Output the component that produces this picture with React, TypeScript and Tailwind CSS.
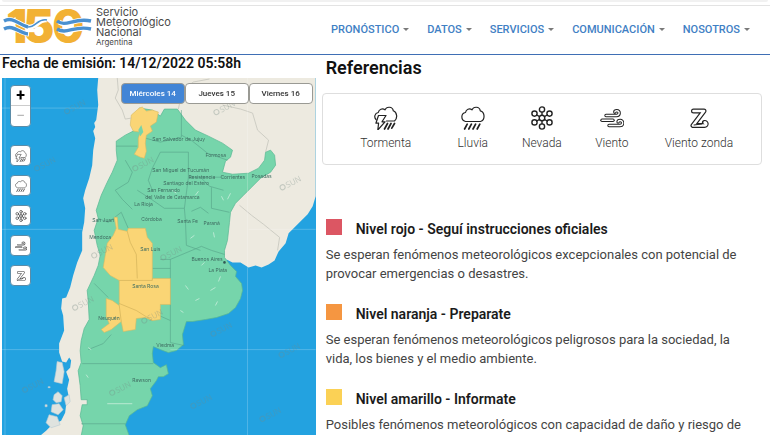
import React, { useState } from 'react';
import clsx from 'clsx';

const menu = ['PRONÓSTICO', 'DATOS', 'SERVICIOS', 'COMUNICACIÓN', 'NOSOTROS'];

const days = ['Miércoles 14', 'Jueves 15', 'Viernes 16'];

const levels = [
  {
    color: 'bg-[#dc5663]',
    title: 'Nivel rojo - Seguí instrucciones oficiales',
    text: 'Se esperan fenómenos meteorológicos excepcionales con potencial de provocar emergencias o desastres.',
  },
  {
    color: 'bg-[#f59641]',
    title: 'Nivel naranja - Preparate',
    text: 'Se esperan fenómenos meteorológicos peligrosos para la sociedad, la vida, los bienes y el medio ambiente.',
  },
  {
    color: 'bg-[#fbd155]',
    title: 'Nivel amarillo - Informate',
    text: 'Posibles fenómenos meteorológicos con capacidad de daño y riesgo de',
  },
];

const cities = [
  { name: 'San Salvador de Jujuy', x: 152, y: 141 },
  { name: 'Formosa', x: 205, y: 157 },
  { name: 'San Miguel de Tucumán', x: 152, y: 172 },
  { name: 'Resistencia', x: 188, y: 179 },
  { name: 'Corrientes', x: 220, y: 179 },
  { name: 'Posadas', x: 251, y: 178 },
  { name: 'Santiago del Estero', x: 163, y: 185 },
  { name: 'San Fernando', x: 147, y: 192 },
  { name: 'del Valle de Catamarca', x: 145, y: 199 },
  { name: 'La Rioja', x: 134, y: 206 },
  { name: 'San Juan', x: 92, y: 222 },
  { name: 'Córdoba', x: 141, y: 221 },
  { name: 'Santa Fe', x: 177, y: 223 },
  { name: 'Paraná', x: 203, y: 225 },
  { name: 'Mendoza', x: 89, y: 239 },
  { name: 'San Luis', x: 140, y: 251 },
  { name: 'Buenos Aires', x: 191, y: 261 },
  { name: 'La Plata', x: 208, y: 272 },
  { name: 'Santa Rosa', x: 132, y: 288 },
  { name: 'Neuquén', x: 98, y: 319 },
  { name: 'Viedma', x: 156, y: 346 },
  { name: 'Rawson', x: 132, y: 381 },
];

const marks = [
  [216, 112], [282, 187], [67, 111], [37, 168], [94, 255], [163, 257], [135, 168], [75, 307],
  [144, 320], [25, 389], [112, 392], [213, 333], [281, 354], [193, 405], [262, 418],
];

type IconProps = { className?: string };

function StormIcon({ className }: IconProps) {
  return (
    <svg viewBox="0 0 24 24" className={className} fill="none" stroke="currentColor" strokeWidth="1.2" strokeLinecap="round" strokeLinejoin="round">
      <path d="M2 13.500C-.3 11 .8 7.200 4.300 6.500 4.800 3.300 8.500 1.800 11 3.800 12.500.3 18.500.2 19.300 4.800 23 6.200 24 12 20.500 15H12.500" />
      <path d="M4.500 9.500 1.900 17.200H4.600L3.800 24 11 15.800H8L12 9.500Z" />
      <path strokeWidth="1.700" d="M13.500 17.500 10.500 23M17 17.500 14 23M20.500 17.500 17.800 22.200" />
    </svg>
  );
}

function RainIcon({ className }: IconProps) {
  return (
    <svg viewBox="0 0 24 24" className={className} fill="none" stroke="currentColor" strokeWidth="1.2" strokeLinecap="round" strokeLinejoin="round">
      <path d="M4.500 15.500C-.5 14 -.2 7.200 4.500 6.500 5 3.300 8.500 1.800 11 3.800 12.500.3 18.500.2 19.300 4.800 24 6 24.500 14 19.500 15.500Z" />
      <path strokeWidth="1.700" d="M6.200 18.200 3.600 23M10.400 18.200 7.800 23M14.600 18.200 12 23M18.800 18.200 16.200 23" />
    </svg>
  );
}

function SnowIcon({ className }: IconProps) {
  return (
    <svg viewBox="0 0 24 24" className={className} fill="none" stroke="currentColor" strokeWidth="1.4" strokeLinecap="round">
      <circle cx="12" cy="12" r="2.800" />
      <circle cx="12" cy="3.500" r="2.600" />
      <circle cx="12" cy="20.500" r="2.600" />
      <circle cx="4.500" cy="7.600" r="2.600" />
      <circle cx="19.500" cy="7.600" r="2.600" />
      <circle cx="4.500" cy="16.400" r="2.600" />
      <circle cx="19.500" cy="16.400" r="2.600" />
      <path d="M12 6.200v3M12 14.800v3M6.800 9l2.800 1.600M14.400 13.400l2.800 1.600M17.200 9l-2.800 1.600M9.600 13.400 6.800 15" />
    </svg>
  );
}

function WindIcon({ className }: IconProps) {
  return (
    <svg viewBox="0 0 24 24" className={className} fill="none" strokeLinecap="round" strokeLinejoin="round">
      <g stroke="currentColor" strokeWidth="3.400">
        <path d="M6 9.500h10.500c3.500 0 3.500-4.800.3-4.800-1.300 0-2 .6-2 1.300" />
        <path d="M2 14.300h11" />
        <path d="M9 19.500h11c3.500 0 3.500-5 .2-5-1.300 0-2.100.6-2.100 1.400" />
      </g>
      <g stroke="white" strokeWidth="1.400">
        <path d="M6 9.500h10.500c3.500 0 3.500-4.800.3-4.800-1.300 0-2 .6-2 1.300" />
        <path d="M2 14.300h11" />
        <path d="M9 19.500h11c3.500 0 3.500-5 .2-5-1.300 0-2.100.6-2.100 1.400" />
      </g>
    </svg>
  );
}

function ZondaIcon({ className }: IconProps) {
  return (
    <svg viewBox="0 0 24 24" className={className} fill="none" strokeLinecap="round" strokeLinejoin="round">
      <path stroke="currentColor" strokeWidth="5" d="M6.500 5H17L6 19.500H17.500C20 19.500 19.500 16 17.500 16.500" />
      <path stroke="white" strokeWidth="2.700" d="M6.500 5H17L6 19.500H17.500C20 19.500 19.500 16 17.500 16.500" />
      <path stroke="currentColor" strokeWidth="1.100" d="M7 19 14.500 18 16 16" />
    </svg>
  );
}

const phenomena = [
  { name: 'Tormenta', Icon: StormIcon },
  { name: 'Lluvia', Icon: RainIcon },
  { name: 'Nevada', Icon: SnowIcon },
  { name: 'Viento', Icon: WindIcon },
  { name: 'Viento zonda', Icon: ZondaIcon },
];

function Logo() {
  return (
    <a href="#inicio" className="flex items-start gap-1 text-[#4a4a4a]">
      <svg viewBox="0 0 90 38" className="h-[38px] w-[90px] overflow-visible">
        <text y="37" fontFamily="Inter, sans-serif" fontWeight="900" fontSize="47" fill="#f2b134">
          <tspan x="4">1</tspan>
          <tspan x="21">5</tspan>
          <tspan x="50" fontWeight="800">0</tspan>
        </text>
        <g fill="none" stroke="white" strokeWidth="5">
          <path d="M2 15C11 10 17 19 26 21S36 12 45 14" />
          <path d="M2 23C11 18 17 27 27 28" />
          <path d="M57 16C65 22 72 11 89 15M57 24C66 29 73 19 89 23" />
        </g>
        <g fill="none" stroke="#4a90d0" strokeWidth="3.400">
          <path d="M2 15C11 10 17 19 26 21" />
          <path d="M2 23C11 18 17 27 26 28" />
          <path strokeWidth="1.600" d="M26 21C34 21 36 12 45 14" />
          <path d="M55 15C64 22 72 11 89 15M55 23C65 29 72 19 89 23" />
        </g>
      </svg>
      <span className="flex flex-col pt-px font-['Inter',sans-serif] text-[11px] leading-[10px]">
        <span>Servicio</span>
        <span>Meteorológico</span>
        <span>Nacional</span>
        <span className="text-[8px]">Argentina</span>
      </span>
    </a>
  );
}

function AlertMap() {
  return (
    <svg viewBox="2 78 313 357" preserveAspectRatio="xMinYMin slice" className="absolute inset-0 h-full w-full bg-[#23a2e0]">
      {/* continente */}
      <path
        fill="#edeae0"
        d="M98 78 97 90 98 105 96 120 94 123 95 127 93 131 95 138 93 150 92 165 89 178 85 190 83 198 85 208 84 222 82 232 82 250 77 262 73 275 70 287 66 297 62 298 61 308 63 315 64 330 59 343 59 352 62 361 66 362 69 357 71 360 70 367 66 371 69 379 67 388 69 398 66 404 65 412 61 420 52 424 46 430 40 435H120L122 420 130 400 148 370 148 346 165 340 178 330 180 315 222 304 236 290 226 259 232 262 240 262 248 267 255 265 261 267 268 264 274 260 278 251 285 243 288 233 297 224 307 214 312 206 315 196V78Z"
      />
      <g fill="#dfe3df" stroke="#b7cbd4" strokeWidth=".6">
        <path d="M57 361 62 362 64 371 62 383 54 381 56 370Z" />
        <path d="M54 394 58 391 62 395 61 401 56 402 53 399Z" />
        <path d="M52 404 59 403 63 409 58 414 51 411Z" />
        <path d="M49 414 57 416 60 424 51 427 46 422Z" />
        <path d="M64 397 69 394 70 401 66 405Z" />
        <path d="M48 386h2v1h-2zM45 404h2v2h-2z" />
      </g>
      {/* sin alertas */}
      <path
        fill="#76d5ab"
        stroke="#58b892"
        strokeWidth=".7"
        d="M139 108 152 110 160 116 164 109H177L185 120 195 130 208 136 222 143 232 150 230 157 225 161 222 172 232 174 248 173 258 168 264 160 265 152 270 150 274 155 275 165 270 172 260 178 250 188 243 195 235 203 230 212 229 222 227 240 224 250 224 257 230 265 236 271 235 276 241 283 242 290 240 298 235 307 228 313 216 317 205 319 192 321 186 321 182 334 183 344 176 350 168 352 160 349 153 346 152 353 153 362 160 367 166 364 168 373 163 376 158 376 156 380 150 388 152 395 147 405 137 409 129 415 125 424 129 435H81L83 425 80 415 82 404H87V399H81L80 385 78 370 81 362 80 350 81 340 84 328 89 319 88 300 87 290 94 275 98 265 100 255 97 245 94 230 98 218 96 210 101 195 107 182 112 172 117 160 116 150V141L125 135 133 131Z"
      />
      {/* limites provinciales */}
      <g fill="none" stroke="#549f86" strokeWidth=".7" opacity=".8">
        <path d="M116 146H137M145 138 160 142 181 137V110M181 135 192 141 207 153 227 160M160 152H188V177M160 152 152 168 148 180 152 190M188 177H222M188 177 184 208 185 220 186 245 200 250M125 160 132 172 128 182 115 190 122 199 132 209M137 190 151 199 164 208 184 208M200 177 209 186 223 190M211 187V208L229 212" />
        <path d="M98 218 108 222 121 212 128 228M152 268H170M160 259H170L201 246 211 250 224 254M170 259V342L184 345M94 283 108 297M88 349 103 343 111 334M82 363H153M81 423H125M170 320 152 312 136 308" />
        <path d="M208 213 200 207 191 211" />
      </g>
      {/* alerta amarilla */}
      <g fill="#fad575" stroke="#d9bb62" strokeWidth=".6">
        <path d="M131 115 139 108 142 107 146 111 152 110 158 112 156 122 150 126 152 131 146 135 145 143 146 151 144 158 140 157 134 154 138 147 138 138 140 132 133 131 130 125Z" />
        <path d="M114 217 117 217 118 229 127 231 128 228 145 228 147 237 152 243 152 278 170 278V304H160V319L152 320 145 317 136 318 135 329 123 331 121 321 111 329 104 332 101 329 109 323 106 316 106 298 112 300 119 305V280L110 275 103 267 107 243 113 235 116 228Z" />
        <path fill="none" stroke="#cdac55" d="M127 231 130 242 136 254 137 278M119 280H152V278M119 305 121 321M119 303 136 310 152 320" />
      </g>
      <path fill="#76d5ab" d="M138 130 141 125 143 132 140 136Z" />
      {/* limites de paises vecinos */}
      <g fill="none" stroke="#c6c6bd" strokeWidth=".8">
        <path d="M117 78 118 90 115 98 122 110 125 119 131 118M178 109 182 90 193 82 209 79M222 105 240 109 252 113 257 130 268 140 265 152M239 205 251 215 263 224 279 237 277 250" />
      </g>
      <g fill="none" stroke="white" strokeWidth=".6" opacity=".35">
        <path d="M5 78V435M247 78V435M2 108H98M2 229H82M2 349H59M170 349H315M248 229H315" />
      </g>
      <g fill="none" stroke="#c9eedc" strokeWidth=".8">
        <path d="M185 285l3 4M210 290l5-3M220 276l-2 5M195 300l4-2M180 310l3 2M215 305l2-4M190 238l4-3M213 232l1 5M172 190l4 3M195 195l3-4M230 193l-3 6M221 196l2 4M204 262l-3 3M88 347l3 2M86 374l2 3M107 403h25" />
      </g>
      <g fontFamily="Open Sans, sans-serif" fontSize="8" fill="#778b85" opacity=".35">
        {marks.map(([x, y]) => (
          <g key={`${x}-${y}`} transform={`translate(${x} ${y}) rotate(-28)`}>
            <circle r="2.500" fill="none" stroke="#778b85" />
            <text x="4" y="3">SUN</text>
          </g>
        ))}
      </g>
      <g fontFamily="Inter, sans-serif" fontSize="5" fill="#3f6c61">
        {cities.map((city) => (
          <text key={city.name} x={city.x} y={city.y}>{city.name}</text>
        ))}
      </g>
      <circle cx="224" cy="262" r="1.300" fill="#315a55" />
    </svg>
  );
}

export default function App() {
  const [day, setDay] = useState(days[0]);

  return (
    <div className="flex min-h-screen flex-col overflow-hidden bg-white font-['Roboto',sans-serif] text-[#212529]">
      <div className="border-b border-[#e3e3e3] px-0.5 pb-[3px]">
        <div className="h-0.5 rounded-b-full bg-[#f1f1f1]" />
      </div>

      <header className="flex h-[49px] items-start justify-between border-b border-[#3f6fb5] pr-5 pl-0.5">
        <Logo />
        <nav className="flex gap-[18px] pt-4">
          {menu.map((item) => (
            <button key={item} type="button" className="flex items-center gap-1 text-[11px] leading-4 font-medium text-[#3f80c4]">
              {item}
              <svg viewBox="0 0 6 4" className="h-1 w-1.5" fill="#7a7a7a">
                <path d="M0 0h6L3 3Z" />
              </svg>
            </button>
          ))}
        </nav>
      </header>

      <main className="grid flex-1 grid-cols-[41fr_59fr]">
        <section className="flex flex-col pl-0.5">
          <h2 className="pb-1.5 text-sm leading-[17px] font-semibold text-[#111]">Fecha de emisión: 14/12/2022 05:58h</h2>
          <div className="relative flex flex-1 items-start justify-between pt-[5px] pr-[3px] pl-2">
            <AlertMap />
            <div className="relative flex flex-col pt-0.5">
              <div className="mb-[18px] flex w-[21px] flex-col overflow-hidden rounded-sm border border-[#5b8ca8] bg-white">
                <button type="button" aria-label="Acercar" className="flex h-5 items-center justify-center border-b border-[#ccc] text-base font-bold text-black">+</button>
                <button type="button" aria-label="Alejar" className="flex h-5 items-center justify-center text-base text-[#b5b5b5]">−</button>
              </div>
              <div className="flex flex-col gap-[9px]">
                {phenomena.map(({ name, Icon }) => (
                  <button key={name} type="button" aria-label={name} className="flex size-[21px] items-center justify-center rounded-sm border border-[#5b8ca8] bg-white text-[#444]">
                    <Icon className="size-3" />
                  </button>
                ))}
              </div>
            </div>
            <div className="relative grid w-48 grid-cols-3">
              {days.map((item) => (
                <button
                  key={item}
                  type="button"
                  onClick={() => setDay(item)}
                  className={clsx(
                    'h-[21px] rounded-sm border border-[#9a9a94] text-[8px] font-medium whitespace-nowrap',
                    item === day ? 'bg-[#4285d6] text-white' : 'bg-white text-[#333]'
                  )}
                >
                  {item}
                </button>
              ))}
            </div>
          </div>
        </section>

        <section className="pr-2 pl-1.5">
          <h1 className="pl-1 text-lg leading-[26px] font-semibold text-[#111]">Referencias</h1>
          <ul className="mt-3 grid grid-cols-[94fr_80fr_58fr_82fr_92fr] rounded-sm border border-[#dedede] px-4 py-3">
            {phenomena.map(({ name, Icon }) => (
              <li key={name} className="flex flex-col items-center gap-1 text-xs leading-[18px] font-light whitespace-nowrap text-[#333]">
                <Icon className="size-6 text-[#222]" />
                {name}
              </li>
            ))}
          </ul>
          <div className="mt-[54px] flex flex-col gap-[21px] pr-4 pl-1">
            {levels.map((level) => (
              <article key={level.title}>
                <h3 className="flex gap-3.5 text-sm leading-5 font-semibold text-[#1b1b1b]">
                  <span className={clsx('size-4 shrink-0', level.color)} />
                  {level.title}
                </h3>
                <p className="mt-1.5 text-[13px] leading-[19px] text-[#444]">{level.text}</p>
              </article>
            ))}
          </div>
        </section>
      </main>
    </div>
  );
}
